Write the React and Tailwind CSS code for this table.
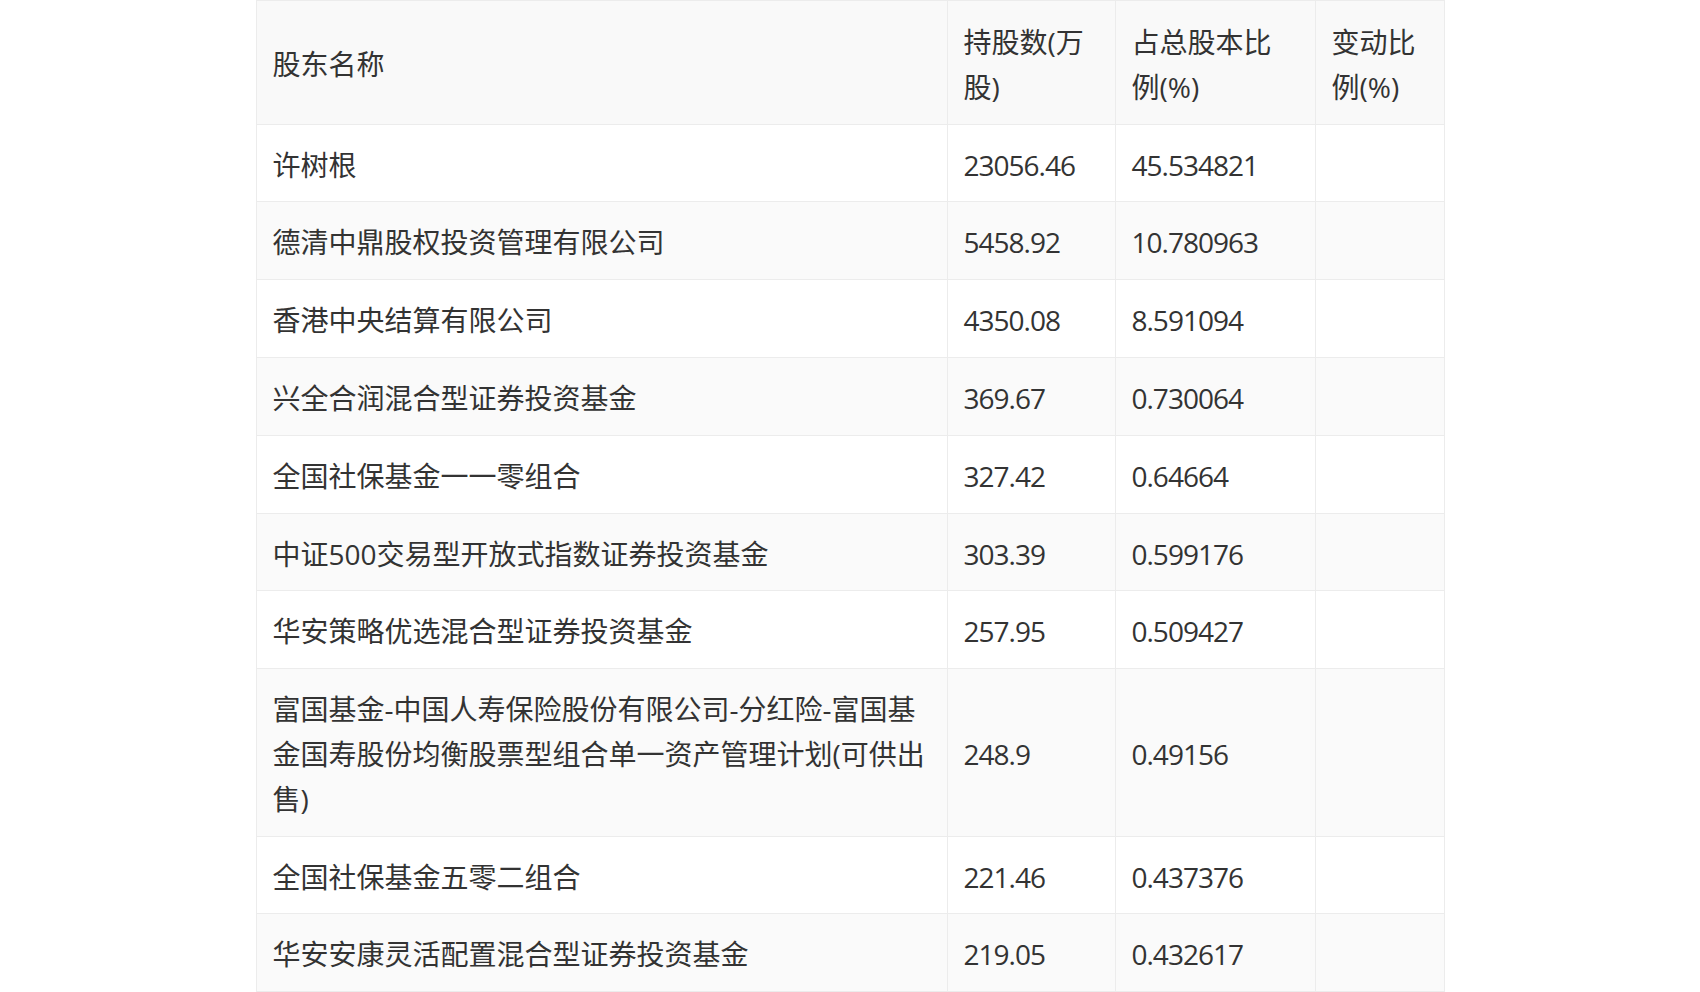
import React from 'react';

const rows = [
  ['许树根', '23056.46', '45.534821'],
  ['德清中鼎股权投资管理有限公司', '5458.92', '10.780963'],
  ['香港中央结算有限公司', '4350.08', '8.591094'],
  ['兴全合润混合型证券投资基金', '369.67', '0.730064'],
  ['全国社保基金一一零组合', '327.42', '0.64664'],
  ['中证500交易型开放式指数证券投资基金', '303.39', '0.599176'],
  ['华安策略优选混合型证券投资基金', '257.95', '0.509427'],
  [
    <>富国基金-中国人寿保险股份有限公司-分红险-富国基<br />金国寿股份均衡股票型组合单一资产管理计划(可供出<br />售)</>,
    '248.9',
    '0.49156',
  ],
  ['全国社保基金五零二组合', '221.46', '0.437376'],
  ['华安安康灵活配置混合型证券投资基金', '219.05', '0.432617'],
];

const cell = 'border border-[#ececec] px-4 pt-[18px] pb-[14px] align-middle text-left font-normal';

export default function App() {
  return (
    <div className="min-h-screen bg-white">
      <table
        className="mx-auto w-[1188px] table-fixed border-collapse text-[28px] leading-[1.6] text-[#333]"
        style={{ fontFamily: '"Open Sans", "Noto Sans CJK SC", sans-serif' }}
      >
        <colgroup>
          <col className="w-[691px]" />
          <col className="w-[168px]" />
          <col className="w-[200px]" />
          <col className="w-[129px]" />
        </colgroup>
        <thead>
          <tr className="bg-[#f9f9f9]">
            <th className={cell + ' pt-[19px] pb-[13px]'}>股东名称</th>
            <th className={cell + ' pt-[19px] pb-[13px]'}>持股数(万<br />股)</th>
            <th className={cell + ' pt-[19px] pb-[13px]'}>占总股本比<br />例(%)</th>
            <th className={cell + ' pt-[19px] pb-[13px]'}>变动比<br />例(%)</th>
          </tr>
        </thead>
        <tbody>
          {rows.map((r, i) => (
            <tr key={i} className={i % 2 === 1 ? 'bg-[#fafafa]' : 'bg-white'}>
              <td className={cell}>{r[0]}</td>
              <td className={cell + ' tracking-[-1px]'}>{r[1]}</td>
              <td className={cell + ' tracking-[-1px]'}>{r[2]}</td>
              <td className={cell}></td>
            </tr>
          ))}
        </tbody>
      </table>
    </div>
  );
}
